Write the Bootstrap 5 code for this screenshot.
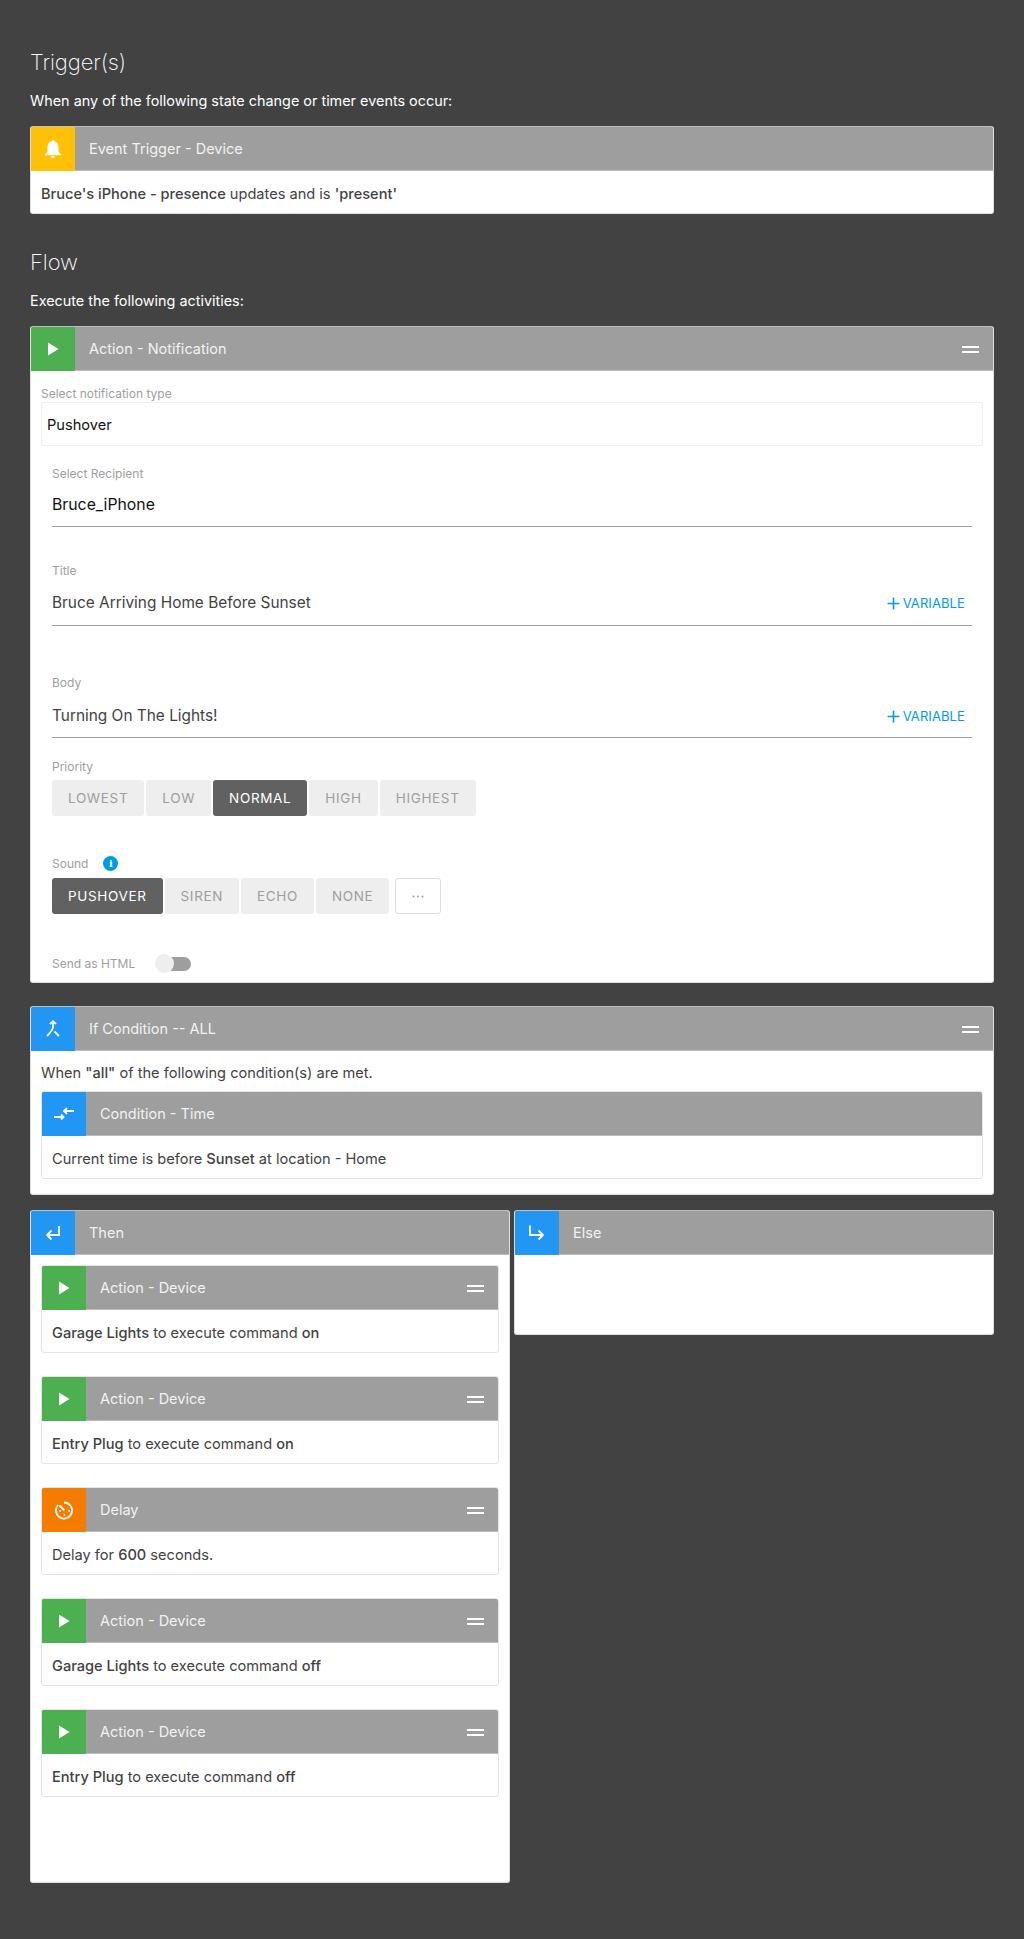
<!DOCTYPE html>
<html lang="en">
<head>
<meta charset="utf-8">
<title>Flow</title>
<link rel="stylesheet" href="https://cdn.jsdelivr.net/npm/bootstrap@5.3.0/dist/css/bootstrap.min.css">
<style>
body{background:#424242;font-family:Inter,"Liberation Sans",sans-serif;color:#fff;font-size:14.6px}
.page-wrap{padding:46px 30px 0}
.sec-title{font-size:22px;font-weight:200;line-height:32px;margin:0 0 13px;letter-spacing:-.1px}
.sec-note{font-size:14.4px;line-height:20px;margin:0 0 15px}
.rule-card{background:#fff;border:1px solid #ddd;border-top-color:#bdbdbd;border-radius:3px;color:#424242;overflow:hidden}
.rule-head{background:#9e9e9e;height:43px;color:#f2f2f2;font-size:14.5px;border-bottom:1px solid #bdbdbd;box-sizing:content-box}
.rule-icon{width:44px;height:44px;margin-bottom:-1px;flex:none}
.rule-name{margin-left:14px;flex:1}
.rule-body{padding:15px 10px 11px;line-height:16px;height:42px}
.rule-body b,.cond-note b{font-weight:500}
.grip{width:17px;height:7px;border-top:2px solid #fff;border-bottom:2px solid #fff;margin-right:14px;margin-top:2px}
.bg-amber{background:#ffc107}.bg-green{background:#4caf50}.bg-blue{background:#2196f3}.bg-orange{background:#f57c00}
.gap-b{margin-bottom:32px}
.field-lbl{font-size:12px;color:#9e9e9e;line-height:14px}
.type-box{border:1px solid #f1f1f1;height:44px;margin:1px 0 0;padding:1px 5px 0;font-size:14.6px;color:#111;line-height:43px;border-radius:2px}
.form-pad{padding:0 10px 0}
.sub-fields{padding:0 11px}
.line-field{border-bottom:1px solid #9e9e9e;font-size:15.4px;line-height:20px;color:#424242}
.line-field .add-var{color:#039be5;font-size:13px;letter-spacing:.1px}
.add-var svg{vertical-align:-2px;margin-right:3px}
.opt-btn{background:#eee;border-radius:3px;height:36px;padding:0 16px;font-size:13.5px;letter-spacing:.65px;color:#9e9e9e;line-height:36px}
.opt-btn.chosen{background:#616161;color:#fff}
.opt-more{background:#fff;border:1px solid #e0e0e0;width:46px;height:36px;border-radius:3px;margin-left:4px}
.info-dot{width:15px;height:15px;background:#039be5;border-radius:50%;color:#fff;font-size:10px;font-weight:700;line-height:15px;text-align:center;font-family:"DejaVu Serif",serif;margin-left:15px}
.toggle-track{width:30px;height:14px;background:#9e9e9e;border-radius:7px;margin-left:26px;position:relative}
.toggle-knob{position:absolute;left:-6px;top:-3px;width:19px;height:19px;border-radius:50%;background:#eee}
.then-col{width:480px}
.else-col{width:480px;height:125px}
.then-card{height:673px}
.nested-list{padding:10px 10px 0}
.nested-list .rule-card{margin-bottom:23px;border-color:#e4e4e4}
</style>
</head>
<body>
<div class="page-wrap">
  <h2 class="sec-title">Trigger(s)</h2>
  <p class="sec-note">When any of the following state change or timer events occur:</p>
  <div class="rule-card gap-b">
    <div class="rule-head d-flex align-items-center">
      <div class="rule-icon bg-amber d-flex align-items-center justify-content-center">
        <svg width="18" height="20" viewBox="0 0 18 20" fill="#fff"><path d="M9 1c-.8 0-1.300.6-1.300 1.300C5 3 3.500 5.300 3.500 8v5L1 15.300V16.300H17V15.300L14.500 13V8c0-2.700-1.500-5-4.200-5.700C10.300 1.600 9.800 1 9 1zM7 17.300c0 1 .9 1.700 2 1.700s2-.7 2-1.700z"/></svg>
      </div>
      <div class="rule-name">Event Trigger - Device</div>
    </div>
    <div class="rule-body"><b>Bruce's iPhone - presence</b> updates and is <b>'present'</b></div>
  </div>

  <h2 class="sec-title">Flow</h2>
  <p class="sec-note">Execute the following activities:</p>
  <div class="rule-card" style="margin-bottom:23px">
    <div class="rule-head d-flex align-items-center">
      <div class="rule-icon bg-green d-flex align-items-center justify-content-center">
        <svg width="12" height="14" viewBox="0 0 12 14" fill="#fff"><path d="M1 0.500V13.500L11.500 7z"/></svg>
      </div>
      <div class="rule-name">Action - Notification</div>
      <div class="grip"></div>
    </div>
    <div class="form-pad">
      <div class="field-lbl" style="margin-top:16px">Select notification type</div>
      <div class="type-box">Pushover</div>
      <div class="sub-fields">
        <div class="field-lbl" style="margin-top:21px">Select Recipient</div>
        <div class="line-field" style="color:#111;padding:14px 0 8px;height:46px;font-size:15.800px">Bruce_iPhone</div>
        <div class="field-lbl" style="margin-top:37px">Title</div>
        <div class="line-field d-flex justify-content-between" style="padding:15px 7px 8px 0;height:48px"><span>Bruce Arriving Home Before Sunset</span><span class="add-var"><svg width="13" height="13" viewBox="0 0 12 12" stroke="#039be5" stroke-width="1.500"><path d="M6 0.500v11M0.500 6h11"/></svg>VARIABLE</span></div>
        <div class="field-lbl" style="margin-top:50px">Body</div>
        <div class="line-field d-flex justify-content-between" style="padding:16px 7px 7px 0;height:48px"><span>Turning On The Lights!</span><span class="add-var"><svg width="13" height="13" viewBox="0 0 12 12" stroke="#039be5" stroke-width="1.500"><path d="M6 0.500v11M0.500 6h11"/></svg>VARIABLE</span></div>
        <div class="field-lbl" style="margin-top:22px">Priority</div>
        <div class="d-flex" style="gap:2px;margin-top:6px">
          <div class="opt-btn">LOWEST</div><div class="opt-btn">LOW</div><div class="opt-btn chosen">NORMAL</div><div class="opt-btn">HIGH</div><div class="opt-btn">HIGHEST</div>
        </div>
        <div class="d-flex align-items-center" style="margin-top:40px"><div class="field-lbl">Sound</div><div class="info-dot">i</div></div>
        <div class="d-flex" style="gap:2px;margin-top:7px">
          <div class="opt-btn chosen">PUSHOVER</div><div class="opt-btn">SIREN</div><div class="opt-btn">ECHO</div><div class="opt-btn">NONE</div>
          <div class="opt-more d-flex align-items-center justify-content-center"><svg width="12" height="3" viewBox="0 0 12 3" fill="#9e9e9e"><circle cx="1.500" cy="1.500" r="1"/><circle cx="6" cy="1.500" r="1"/><circle cx="10.500" cy="1.500" r="1"/></svg></div>
        </div>
        <div class="d-flex align-items-center" style="margin-top:43px;padding-bottom:11px"><div class="field-lbl">Send as HTML</div><div class="toggle-track"><div class="toggle-knob"></div></div></div>
      </div>
    </div>
  </div>

  <div class="rule-card" style="margin-bottom:15px">
    <div class="rule-head d-flex align-items-center">
      <div class="rule-icon bg-blue d-flex align-items-center justify-content-center">
        <svg width="16" height="18" viewBox="0 0 16 18" fill="none" stroke="#fff" stroke-width="1.800"><path d="M5 4L8 1.200 11 4M8 1.500V7C8 10 6 12 2 16M9.500 11.500L14 16"/></svg>
      </div>
      <div class="rule-name">If Condition -- ALL</div>
      <div class="grip"></div>
    </div>
    <div class="cond-note" style="padding:14px 10px 10px;line-height:16px">When <b>"all"</b> of the following condition(s) are met.</div>
    <div class="rule-card" style="margin:0 10px 15px;border-color:#e4e4e4">
      <div class="rule-head d-flex align-items-center">
        <div class="rule-icon bg-blue d-flex align-items-center justify-content-center">
          <svg width="22" height="14" viewBox="0 0 22 14" fill="none" stroke="#fff" stroke-width="1.800"><path d="M21 4H11M14 1L11 4 14 7M1 10H10M8 7.500L10.500 10 8 12.500"/></svg>
        </div>
        <div class="rule-name">Condition - Time</div>
      </div>
      <div class="rule-body">Current time is before <b>Sunset</b> at location - Home</div>
    </div>
  </div>

  <div class="d-flex" style="gap:4px;align-items:flex-start">
    <div class="rule-card then-col then-card">
      <div class="rule-head d-flex align-items-center">
        <div class="rule-icon bg-blue d-flex align-items-center justify-content-center">
          <svg width="18" height="18" viewBox="0 0 18 18" fill="none" stroke="#fff" stroke-width="1.800"><path d="M15 2V11H3M7.500 6.500L3 11 7.500 15.500"/></svg>
        </div>
        <div class="rule-name">Then</div>
      </div>
      <div class="nested-list">
        <div class="rule-card">
          <div class="rule-head d-flex align-items-center">
            <div class="rule-icon bg-green d-flex align-items-center justify-content-center"><svg width="12" height="14" viewBox="0 0 12 14" fill="#fff"><path d="M1 0.500V13.500L11.500 7z"/></svg></div>
            <div class="rule-name">Action - Device</div><div class="grip"></div>
          </div>
          <div class="rule-body"><b>Garage Lights</b> to execute command <b>on</b></div>
        </div>
        <div class="rule-card">
          <div class="rule-head d-flex align-items-center">
            <div class="rule-icon bg-green d-flex align-items-center justify-content-center"><svg width="12" height="14" viewBox="0 0 12 14" fill="#fff"><path d="M1 0.500V13.500L11.500 7z"/></svg></div>
            <div class="rule-name">Action - Device</div><div class="grip"></div>
          </div>
          <div class="rule-body"><b>Entry Plug</b> to execute command <b>on</b></div>
        </div>
        <div class="rule-card">
          <div class="rule-head d-flex align-items-center">
            <div class="rule-icon bg-orange d-flex align-items-center justify-content-center">
              <svg width="19" height="19" viewBox="0 0 19 19" fill="none" stroke="#fff" stroke-width="1.800"><path d="M9 1.500a8 8 0 1 1-6 2.700"/><path d="M4.500 4.500L9.500 9.500"/><circle cx="5" cy="10" r=".6" fill="#fff" stroke-width="1"/><circle cx="9.500" cy="14" r=".6" fill="#fff" stroke-width="1"/><circle cx="14" cy="10" r=".6" fill="#fff" stroke-width="1"/></svg>
            </div>
            <div class="rule-name">Delay</div><div class="grip"></div>
          </div>
          <div class="rule-body">Delay for <b>600</b> seconds.</div>
        </div>
        <div class="rule-card">
          <div class="rule-head d-flex align-items-center">
            <div class="rule-icon bg-green d-flex align-items-center justify-content-center"><svg width="12" height="14" viewBox="0 0 12 14" fill="#fff"><path d="M1 0.500V13.500L11.500 7z"/></svg></div>
            <div class="rule-name">Action - Device</div><div class="grip"></div>
          </div>
          <div class="rule-body"><b>Garage Lights</b> to execute command <b>off</b></div>
        </div>
        <div class="rule-card">
          <div class="rule-head d-flex align-items-center">
            <div class="rule-icon bg-green d-flex align-items-center justify-content-center"><svg width="12" height="14" viewBox="0 0 12 14" fill="#fff"><path d="M1 0.500V13.500L11.500 7z"/></svg></div>
            <div class="rule-name">Action - Device</div><div class="grip"></div>
          </div>
          <div class="rule-body"><b>Entry Plug</b> to execute command <b>off</b></div>
        </div>
      </div>
    </div>
    <div class="rule-card else-col">
      <div class="rule-head d-flex align-items-center">
        <div class="rule-icon bg-blue d-flex align-items-center justify-content-center">
          <svg width="18" height="18" viewBox="0 0 18 18" fill="none" stroke="#fff" stroke-width="1.800"><path d="M2 1.500V11H15M10.500 6.500L15 11 10.500 15.500"/></svg>
        </div>
        <div class="rule-name">Else</div>
      </div>
    </div>
  </div>
</div>
<script src="https://cdn.jsdelivr.net/npm/bootstrap@5.3.0/dist/js/bootstrap.bundle.min.js"></script>
</body>
</html>
